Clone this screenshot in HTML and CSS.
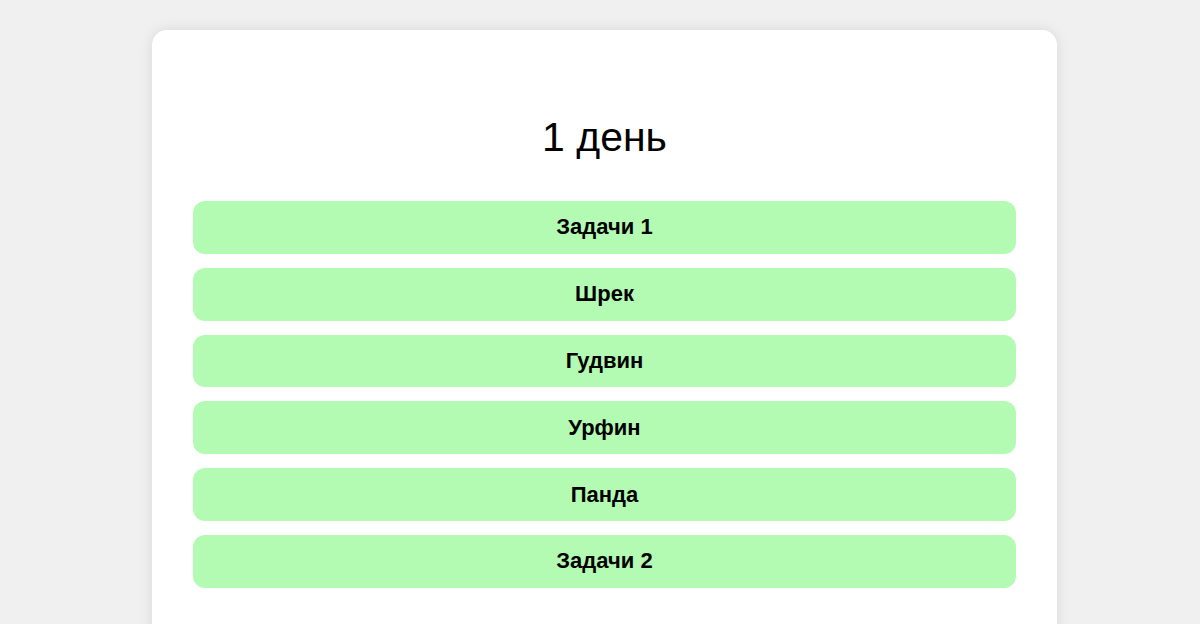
FILE: index.html
```html
<!DOCTYPE html>
<html lang="ru">
<head>
<meta charset="utf-8">
<title>1 день</title>
<link rel="stylesheet" href="styles.css">
</head>
<body>
<main class="page">
  <section class="card">
    <h1 class="title">1 день</h1>
    <div class="list">
      <button class="item">Задачи 1</button>
      <button class="item">Шрек</button>
      <button class="item">Гудвин</button>
      <button class="item">Урфин</button>
      <button class="item">Панда</button>
      <button class="item">Задачи 2</button>
    </div>
  </section>
</main>
</body>
</html>
```
FILE: styles.css
```css
html, body {
  margin: 0;
  padding: 0;
  background: #f0f0f0;
  font-family: "Liberation Sans", Arial, sans-serif;
  height: 100%;
  overflow: hidden;
}

.page {
  display: flex;
  justify-content: center;
  padding: 30px 0 0 9px;
}

.card {
  box-sizing: border-box;
  width: 905px;
  background: #ffffff;
  border-radius: 15px;
  box-shadow: 0 0 14px rgba(0, 0, 0, 0.1);
  padding: 84px 41px 60px;
}

.title {
  margin: 0 0 41px;
  font-size: 41px;
  font-weight: normal;
  line-height: 46px;
  text-align: center;
  color: #000;
}

.list {
  display: flex;
  flex-direction: column;
  gap: 14px;
}

.item {
  display: block;
  width: 100%;
  height: 52.8px;
  border: none;
  border-radius: 12px;
  background: #b3fbb3;
  font-family: "Liberation Sans", Arial, sans-serif;
  font-size: 22px;
  font-weight: bold;
  color: #000;
  text-align: center;
  padding: 0;
  cursor: pointer;
}
```
